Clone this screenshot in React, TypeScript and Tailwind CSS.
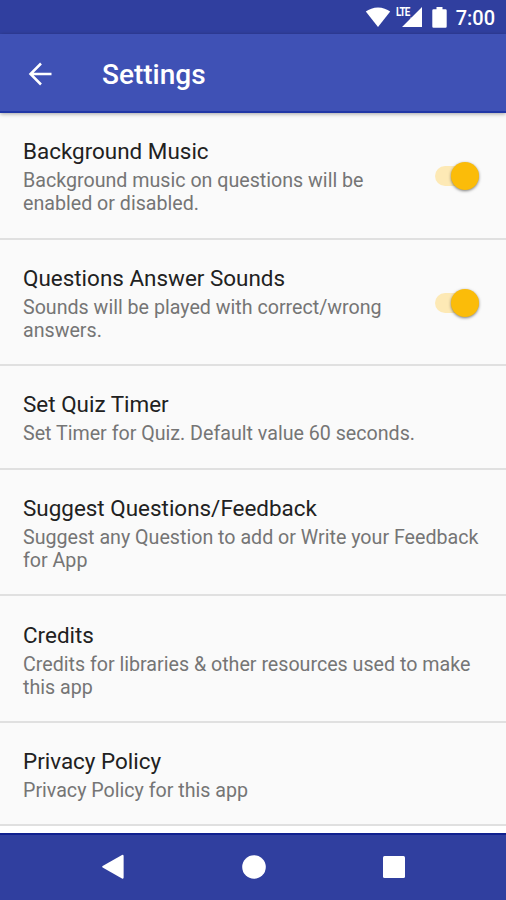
import React, { useState } from 'react';

interface Setting {
  id: string;
  title: string;
  summary: string[];
  toggle?: boolean;
}

const settings: Setting[] = [
  {
    id: 'music',
    title: 'Background Music',
    summary: ['Background music on questions will be', 'enabled or disabled.'],
    toggle: true,
  },
  {
    id: 'sounds',
    title: 'Questions Answer Sounds',
    summary: ['Sounds will be played with correct/wrong', 'answers.'],
    toggle: true,
  },
  { id: 'timer', title: 'Set Quiz Timer', summary: ['Set Timer for Quiz. Default value 60 seconds.'] },
  {
    id: 'feedback',
    title: 'Suggest Questions/Feedback',
    summary: ['Suggest any Question to add or Write your Feedback', 'for App'],
  },
  {
    id: 'credits',
    title: 'Credits',
    summary: ['Credits for libraries & other resources used to make', 'this app'],
  },
  { id: 'privacy', title: 'Privacy Policy', summary: ['Privacy Policy for this app'] },
];

const StatusBar = () => (
  <div className="h-[34px] shrink-0 bg-[#303f9f] flex items-center justify-end pr-[11px] text-white">
    <svg className="w-[26px] h-[20px]" viewBox="0 0 26 20" fill="currentColor">
      <path d="M13 20 0.8 4.6C4 2 8.300 0.400 13 0.400S22 2 25.200 4.600Z" />
    </svg>
    <div className="relative ml-[5px] w-[27px] h-[20px]">
      <span className="absolute left-0 -top-px origin-left scale-x-[0.82] text-[12px] leading-[12px] font-bold tracking-[-1px]">
        LTE
      </span>
      <svg className="w-full h-full" viewBox="0 0 27 20" fill="currentColor">
        <path d="M26 0V20H6L14.500 11.500V10.500H15.500Z" />
      </svg>
    </div>
    <svg className="ml-[9px] w-[15px] h-[21px]" viewBox="0 0 15 21" fill="currentColor">
      <path d="M4.500 0h6v2.200h3q1.200 0 1.200 1.200v16.200q0 1.200-1.200 1.200h-12q-1.200 0-1.200-1.200v-16.200q0-1.200 1.200-1.200h3z" />
    </svg>
    <span className="ml-[9px] mt-[2px] text-[20px] leading-[32px] font-medium">7:00</span>
  </div>
);

const AppBar = () => (
  <header className="relative z-10 h-[79px] shrink-0 bg-[#3f51b5] border-b-2 border-[#2137a6] shadow-[0_1px_4px_rgba(0,0,0,0.35)] flex items-center text-white">
    <button className="ml-[28px] mt-[2px] w-[24px] h-[24px]" aria-label="Back">
      <svg viewBox="0 0 24 24" fill="none" stroke="currentColor" strokeWidth="2.500">
        <path d="M23.500 12H2.500M13 1.500 2.500 12 13 22.500" />
      </svg>
    </button>
    <h1 className="ml-[50px] mt-[4px] text-[28px] leading-[32px] font-medium">Settings</h1>
  </header>
);

const Toggle = ({ on, onChange }: { on: boolean; onChange: () => void }) => (
  <button
    role="switch"
    aria-checked={on}
    onClick={onChange}
    className="mt-[2px] mr-[27px] w-[44px] h-[30px] shrink-0 flex items-center"
  >
    <span
      className={`w-full h-[20px] rounded-full flex items-center ${
        on ? 'bg-[#fde9b5] justify-end' : 'bg-[#bdbdbd] justify-start'
      }`}
    >
      <span
        className={`w-[28px] h-[28px] rounded-full shadow-[0_1px_3px_rgba(0,0,0,0.5)] ${
          on ? 'bg-[#fbbc09]' : 'bg-[#fafafa]'
        }`}
      />
    </span>
  </button>
);

const NavBar = () => (
  <nav className="h-[67px] shrink-0 bg-[#303f9f] border-t-2 border-[#10208f] flex items-center justify-between pl-[101px] pr-[101px] pb-[2px] text-white">
    <svg className="w-[24px] h-[26px]" viewBox="0 0 24 26" fill="currentColor">
      <path d="M1.600 12 21 0.900Q22.600 0.200 22.600 1.900V23.600Q22.600 25.300 21 24.500L1.600 13.500Q0.500 12.700 1.600 12Z" />
    </svg>
    <svg className="-ml-px w-[24px] h-[24px]" viewBox="0 0 24 24" fill="currentColor">
      <circle cx="12" cy="12" r="11.800" />
    </svg>
    <svg className="w-[22px] h-[22px]" viewBox="0 0 22 22" fill="currentColor">
      <rect width="22" height="22" rx="1.500" />
    </svg>
  </nav>
);

export default function App() {
  const [enabled, setEnabled] = useState<Record<string, boolean>>({ music: true, sounds: true });

  return (
    <div className="w-[506px] h-[900px] flex flex-col overflow-hidden bg-white font-['Roboto',sans-serif]">
      <StatusBar />
      <AppBar />
      <main className="flex-1 min-h-0 overflow-hidden">
        {settings.map(item => (
          <section
            key={item.id}
            className={`flex items-center bg-[#fafafa] border-b-2 border-[#e0e0e0] ${
              item.summary.length > 1 ? 'h-[126.600px]' : 'h-[103.500px]'
            }`}
          >
            <div className="flex-1 pl-[23px] pt-[3px] whitespace-nowrap">
              <h2 className="text-[22.450px] leading-[26px] text-[#212121]">{item.title}</h2>
              <div className="mt-[5px] text-[19.650px] leading-[23px] text-[#757575]">
                {item.summary.map(line => (
                  <p key={line}>{line}</p>
                ))}
              </div>
            </div>
            {item.toggle && (
              <Toggle
                on={enabled[item.id]}
                onChange={() => setEnabled({ ...enabled, [item.id]: !enabled[item.id] })}
              />
            )}
          </section>
        ))}
      </main>
      <NavBar />
    </div>
  );
}
